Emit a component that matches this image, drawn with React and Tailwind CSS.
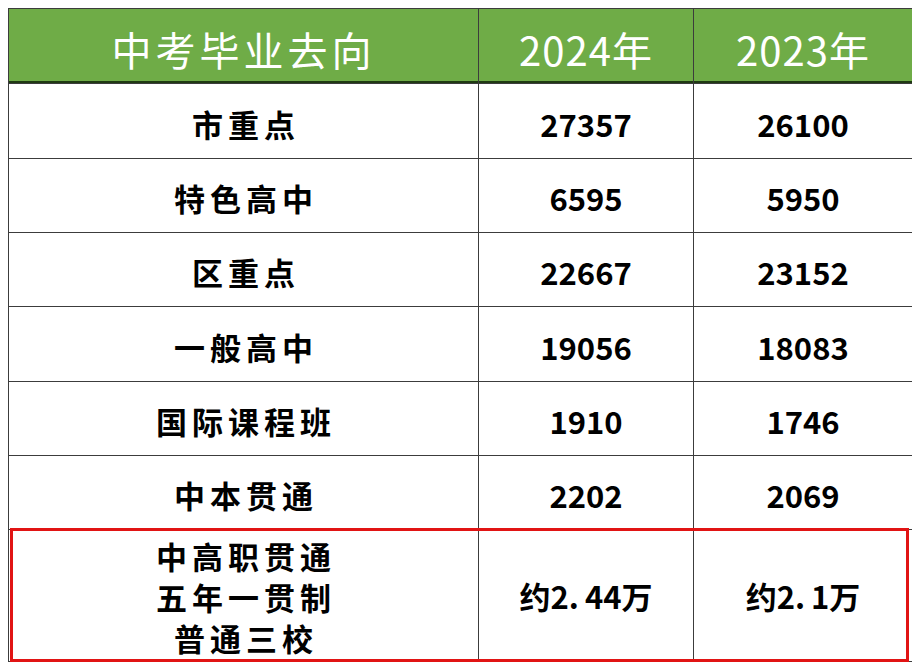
import React from "react";

const rows = [
  ["市重点", "27357", "26100"],
  ["特色高中", "6595", "5950"],
  ["区重点", "22667", "23152"],
  ["一般高中", "19056", "18083"],
  ["国际课程班", "1910", "1746"],
  ["中本贯通", "2202", "2069"],
];

const font = { fontFamily: '"Noto Sans CJK SC", "Noto Sans", sans-serif' };

function Approx({ a, b }) {
  return (
    <span>
      约{a}
      <span className="inline-block w-[0.52em] text-left">.</span>
      {b}万
    </span>
  );
}

export default function App() {
  return (
    <div className="w-[921px] h-[669px] bg-white pl-2 pt-2" style={font}>
      <div className="relative w-[904px]">
        <div className="grid grid-cols-[469px_214px_218px] grid-rows-[74px_74px_73px_73px_74px_73px_73px_131px] gap-px bg-[#3c3c3c] p-px">
          <div className="bg-[#6fac47] flex items-center justify-center pt-[8px] text-white text-[40px] font-normal tracking-[4px] border-b-2 border-[#1f3a12]">
            中考毕业去向
          </div>
          <div className="bg-[#6fac47] flex items-center justify-center pt-[8px] text-white text-[40px] font-normal tracking-[1px] border-b-2 border-[#1f3a12]">
            2024年
          </div>
          <div className="bg-[#6fac47] flex items-center justify-center pt-[8px] text-white text-[40px] font-normal tracking-[1px] border-b-2 border-[#1f3a12]">
            2023年
          </div>
          {rows.map((r) => (
            <React.Fragment key={r[0]}>
              <div className="bg-white flex items-center justify-center pt-[6px] text-black text-[31px] font-bold tracking-[5px] pl-[5px]">
                {r[0]}
              </div>
              <div className="bg-white flex items-center justify-center pt-[6px] text-black text-[31px] font-bold">
                {r[1]}
              </div>
              <div className="bg-white flex items-center justify-center pt-[6px] text-black text-[31px] font-bold">
                {r[2]}
              </div>
            </React.Fragment>
          ))}
          <div className="bg-white flex flex-col items-center justify-center pt-[1px] text-black text-[31px] font-bold tracking-[5px] pl-[5px] leading-[41px]">
            <span>中高职贯通</span>
            <span>五年一贯制</span>
            <span>普通三校</span>
          </div>
          <div className="bg-white flex items-center justify-center pt-[2px] text-black text-[31px] font-bold">
            <Approx a="2" b="44" />
          </div>
          <div className="bg-white flex items-center justify-center pt-[2px] text-black text-[31px] font-bold">
            <Approx a="2" b="1" />
          </div>
        </div>
        <div className="absolute left-[2px] top-[520px] w-[899px] h-[134px] border-[3px] border-[#e11414] pointer-events-none" />
      </div>
    </div>
  );
}
